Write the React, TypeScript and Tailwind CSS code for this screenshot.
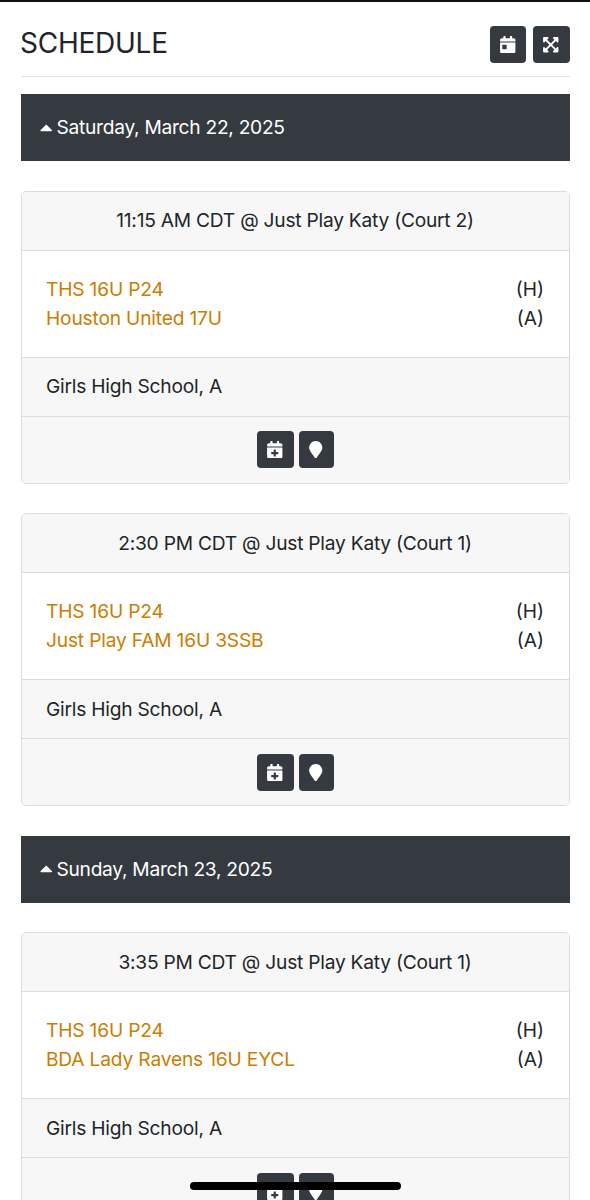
import { FaCalendarDay, FaCalendarPlus, FaCaretUp, FaExpandArrowsAlt, FaMapMarker } from "react-icons/fa";

type Game = {
  time: string;
  home: string;
  away: string;
  division: string;
};

const days: { date: string; games: Game[] }[] = [
  {
    date: "Saturday, March 22, 2025",
    games: [
      { time: "11:15 AM CDT @ Just Play Katy (Court 2)", home: "THS 16U P24", away: "Houston United 17U", division: "Girls High School, A" },
      { time: "2:30 PM CDT @ Just Play Katy (Court 1)", home: "THS 16U P24", away: "Just Play FAM 16U 3SSB", division: "Girls High School, A" },
    ],
  },
  {
    date: "Sunday, March 23, 2025",
    games: [
      { time: "3:35 PM CDT @ Just Play Katy (Court 1)", home: "THS 16U P24", away: "BDA Lady Ravens 16U EYCL", division: "Girls High School, A" },
    ],
  },
];

const btn = "flex h-[37px] items-center justify-center rounded bg-[#343a40] text-[17.5px] text-white";

function TeamRow({ name, side }: { name: string; side: string }) {
  return (
    <div className="flex justify-between">
      <a href="#" className="tracking-[-0.19px] text-[#cd7c00]">{name}</a>
      <span>{side}</span>
    </div>
  );
}

function GameCard({ game }: { game: Game }) {
  return (
    <div className="h-[293px] shrink-0 overflow-hidden rounded-[5px] border border-[#dcdcdc] bg-white">
      <div className="h-[59px] border-b border-[#dcdcdc] bg-[#f7f7f7] pt-[14.4px] pr-px text-center tracking-[-0.24px]">{game.time}</div>
      <div className="h-[106px] pt-6 pr-[25px] pl-6">
        <TeamRow name={game.home} side="(H)" />
        <TeamRow name={game.away} side="(A)" />
      </div>
      <div className="h-[59px] border-t border-[#dcdcdc] bg-[#f7f7f7] px-6 pt-[14.4px] tracking-[-0.23px]">{game.division}</div>
      <div className="flex h-[67px] justify-center gap-[5px] border-t border-[#dcdcdc] bg-[#f7f7f7] pt-[14.4px]">
        <button className={`${btn} w-[37px] pr-px`}><FaCalendarPlus /></button>
        <button className={`${btn} w-[35px] pr-px`}><FaMapMarker /></button>
      </div>
    </div>
  );
}

export default function App() {
  return (
    <div className="relative h-[1200px] overflow-hidden border-t-2 border-[#111] bg-white px-[21px] pr-5 font-[Inter,sans-serif] text-[19.2px] leading-[29px] text-[#212529]">
      <header className="flex h-[75px] justify-between border-b border-[#dee2e6] pt-6">
        <h1 className="-ml-px text-[28px] leading-[34px] tracking-[-0.25px]">SCHEDULE</h1>
        <div className="flex gap-[7px]">
          <button className={`${btn} w-[36px]`}><FaCalendarDay /></button>
          <button className={`${btn} w-[37px] pr-px`}><FaExpandArrowsAlt /></button>
        </div>
      </header>

      <main className="flex flex-col pt-[17.4px]">
        {days.map((day) => (
          <section key={day.date} className="mb-[29.6px] flex flex-col">
            <h2 className="flex h-[67px] items-center gap-[4.5px] bg-[#343a40] pl-[18.5px] tracking-[-0.28px] text-white">
              <FaCaretUp className="mb-px h-[21px] w-[12.5px]" />
              {day.date}
            </h2>
            <div className="flex flex-col gap-[29.6px] pt-[29.4px]">
              {day.games.map((game) => (
                <GameCard key={game.time} game={game} />
              ))}
            </div>
          </section>
        ))}
      </main>

      {/* home indicator */}
      <div className="absolute bottom-[10.5px] left-[189.5px] h-[7.5px] w-[211.5px] rounded-full bg-black" />
    </div>
  );
}
